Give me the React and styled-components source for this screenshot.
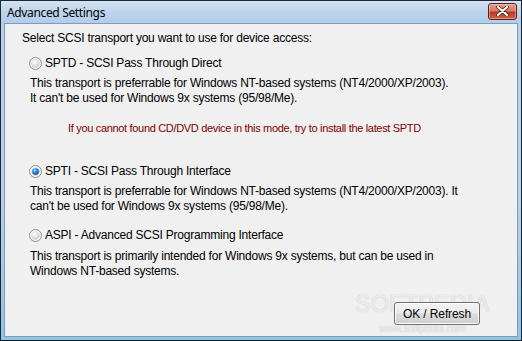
import React from "react";
import styled, { createGlobalStyle } from "styled-components";

const GlobalStyle = createGlobalStyle`
  html, body {
    margin: 0;
    padding: 0;
    background: #ffffff;
  }
  * {
    box-sizing: border-box;
  }
`;

const Window = styled.div`
  position: relative;
  width: 522px;
  height: 341px;
  display: flex;
  flex-direction: column;
  border: 1px solid #1c2733;
  border-bottom-color: #101820;
  background: linear-gradient(180deg, #c9dcef 0px, #b9d1ea 22px, #b8d0e8 60%, #8fc4e6 100%);
  overflow: hidden;
`;

const TitleBar = styled.div`
  height: 22px;
  flex: none;
  display: flex;
  align-items: center;
  justify-content: space-between;
  padding: 0 4px 0 6px;
  background: linear-gradient(180deg, #d3e3f3 0%, #bed4ec 50%, #b3cde8 100%);
`;

const Title = styled.span`
  font-family: "Noto Sans", "Open Sans", sans-serif;
  font-size: 12px;
  color: #000;
  letter-spacing: -0.35px;
`;

const CloseButton = styled.div`
  width: 29px;
  height: 17px;
  margin-top: -2px;
  border: 1px solid #5a2016;
  border-radius: 3px;
  background: linear-gradient(180deg, #e0a08f 0%, #d37a66 45%, #b93a24 55%, #c9624a 100%);
  box-shadow: inset 0 0 0 1px rgba(255, 220, 210, 0.45);
  display: flex;
  align-items: center;
  justify-content: center;
`;

const Content = styled.div`
  position: relative;
  flex: 1;
  margin: 0 3px 3px 3px;
  border: 1px solid #7e9bbd;
  background: #f0f0f0;
  display: flex;
  flex-direction: column;
  padding: 7px 0 11px 17px;
  font-family: "Liberation Sans", Arial, sans-serif;
  font-size: 12px;
  line-height: 15px;
  letter-spacing: -0.22px;
  color: #000;
`;

const Heading = styled.div`
  margin-bottom: 10px;
`;

const Option = styled.div`
  display: flex;
  flex-direction: column;
  margin-top: ${(p) => p.$gap || 0}px;
  padding-left: 7px;
`;

const RadioRow = styled.label`
  display: flex;
  align-items: center;
  gap: 3px;
  height: 15px;
`;

const Desc = styled.div`
  margin-top: ${(p) => p.$gap || 5}px;
  padding-left: 1px;
`;

const Note = styled.div`
  margin-top: 15px;
  padding-left: 39px;
  color: #7f0000;
  font-size: 11px;
  letter-spacing: -0.32px;
`;

const Footer = styled.div`
  position: relative;
  z-index: 1;
  margin-top: auto;
  display: flex;
  justify-content: flex-end;
  padding-right: 37px;
`;

const Button = styled.button`
  width: 86px;
  height: 23px;
  border: 1px solid #707070;
  border-radius: 3px;
  background: linear-gradient(180deg, #f2f2f2 0%, #ebebeb 48%, #dddddd 52%, #cfcfcf 100%);
  box-shadow: inset 0 0 0 1px #fcfcfc;
  font-family: "Liberation Sans", Arial, sans-serif;
  font-size: 12px;
  letter-spacing: -0.1px;
  color: #000;
  padding: 0;
`;

const Watermark = styled.div`
  position: absolute;
  z-index: 0;
  right: 27px;
  bottom: 2px;
  display: flex;
  flex-direction: column;
  align-items: center;
  pointer-events: none;
  font-family: "Liberation Sans", Arial, sans-serif;
  color: rgba(255, 255, 255, 0.75);
  text-shadow: 0 0 1px rgba(110, 110, 110, 0.5);
`;

const WatermarkBig = styled.span`
  font-size: 23px;
  letter-spacing: 0.5px;
  line-height: 24px;
`;

const WatermarkSmall = styled.span`
  font-size: 10px;
  line-height: 11px;
  margin-top: 7px;
  letter-spacing: 0;
`;

function Radio({ checked }) {
  return (
    <svg width="13" height="13" viewBox="0 0 13 13">
      <defs>
        <radialGradient id="rOff" cx="0.4" cy="0.35" r="0.7">
          <stop offset="0" stopColor="#ffffff" />
          <stop offset="1" stopColor="#c9c9c9" />
        </radialGradient>
        <radialGradient id="rOn" cx="0.4" cy="0.35" r="0.7">
          <stop offset="0" stopColor="#9fdcff" />
          <stop offset="0.5" stopColor="#1d86d0" />
          <stop offset="1" stopColor="#0b3f78" />
        </radialGradient>
      </defs>
      <circle cx="6.5" cy="6.5" r="6" fill="#f4f4f4" stroke="#8e8f8f" strokeWidth="1" />
      <circle cx="6.5" cy="6.5" r="4.2" fill="url(#rOff)" />
      {checked && <circle cx="6.5" cy="6.5" r="3.3" fill="url(#rOn)" />}
    </svg>
  );
}

function CloseIcon() {
  return (
    <svg width="13" height="10" viewBox="0 0 13 10">
      <path
        d="M2 1 L11 9 M11 1 L2 9"
        stroke="#4a1a12"
        strokeWidth="3.6"
        strokeLinecap="round"
      />
      <path
        d="M2 1 L11 9 M11 1 L2 9"
        stroke="#ffffff"
        strokeWidth="2.2"
        strokeLinecap="round"
      />
    </svg>
  );
}

const options = [
  {
    label: "SPTD - SCSI Pass Through Direct",
    lines: [
      "This transport is preferrable for Windows NT-based systems (NT4/2000/XP/2003).",
      "It can't be used for Windows 9x systems (95/98/Me).",
    ],
    note: "If you cannot found CD/DVD device in this mode, try to install the latest SPTD",
    gap: 0,
  },
  {
    label: "SPTI - SCSI Pass Through Interface",
    lines: [
      "This transport is preferrable for Windows NT-based systems (NT4/2000/XP/2003). It",
      "can't be used for Windows 9x systems (95/98/Me).",
    ],
    checked: true,
    gap: 28,
  },
  {
    label: "ASPI - Advanced SCSI Programming Interface",
    lines: [
      "This transport is primarily intended for Windows 9x systems, but can be used in",
      "Windows NT-based systems.",
    ],
    gap: 14,
    descGap: 6,
  },
];

function App() {
  return (
    <>
      <GlobalStyle />
      <Window>
        <TitleBar>
          <Title>Advanced Settings</Title>
          <CloseButton>
            <CloseIcon />
          </CloseButton>
        </TitleBar>
        <Content>
          <Heading>Select SCSI transport you want to use for device access:</Heading>
          {options.map((opt) => (
            <Option key={opt.label} $gap={opt.gap}>
              <RadioRow>
                <Radio checked={opt.checked} />
                {opt.label}
              </RadioRow>
              <Desc $gap={opt.descGap}>
                {opt.lines.map((line, i) => (
                  <div key={i}>{line}</div>
                ))}
              </Desc>
              {opt.note && <Note>{opt.note}</Note>}
            </Option>
          ))}
          <Watermark>
            <WatermarkBig>SOFTPEDIA</WatermarkBig>
            <WatermarkSmall>www.softpedia.com</WatermarkSmall>
          </Watermark>
          <Footer>
            <Button>OK / Refresh</Button>
          </Footer>
        </Content>
      </Window>
    </>
  );
}

export default App;
